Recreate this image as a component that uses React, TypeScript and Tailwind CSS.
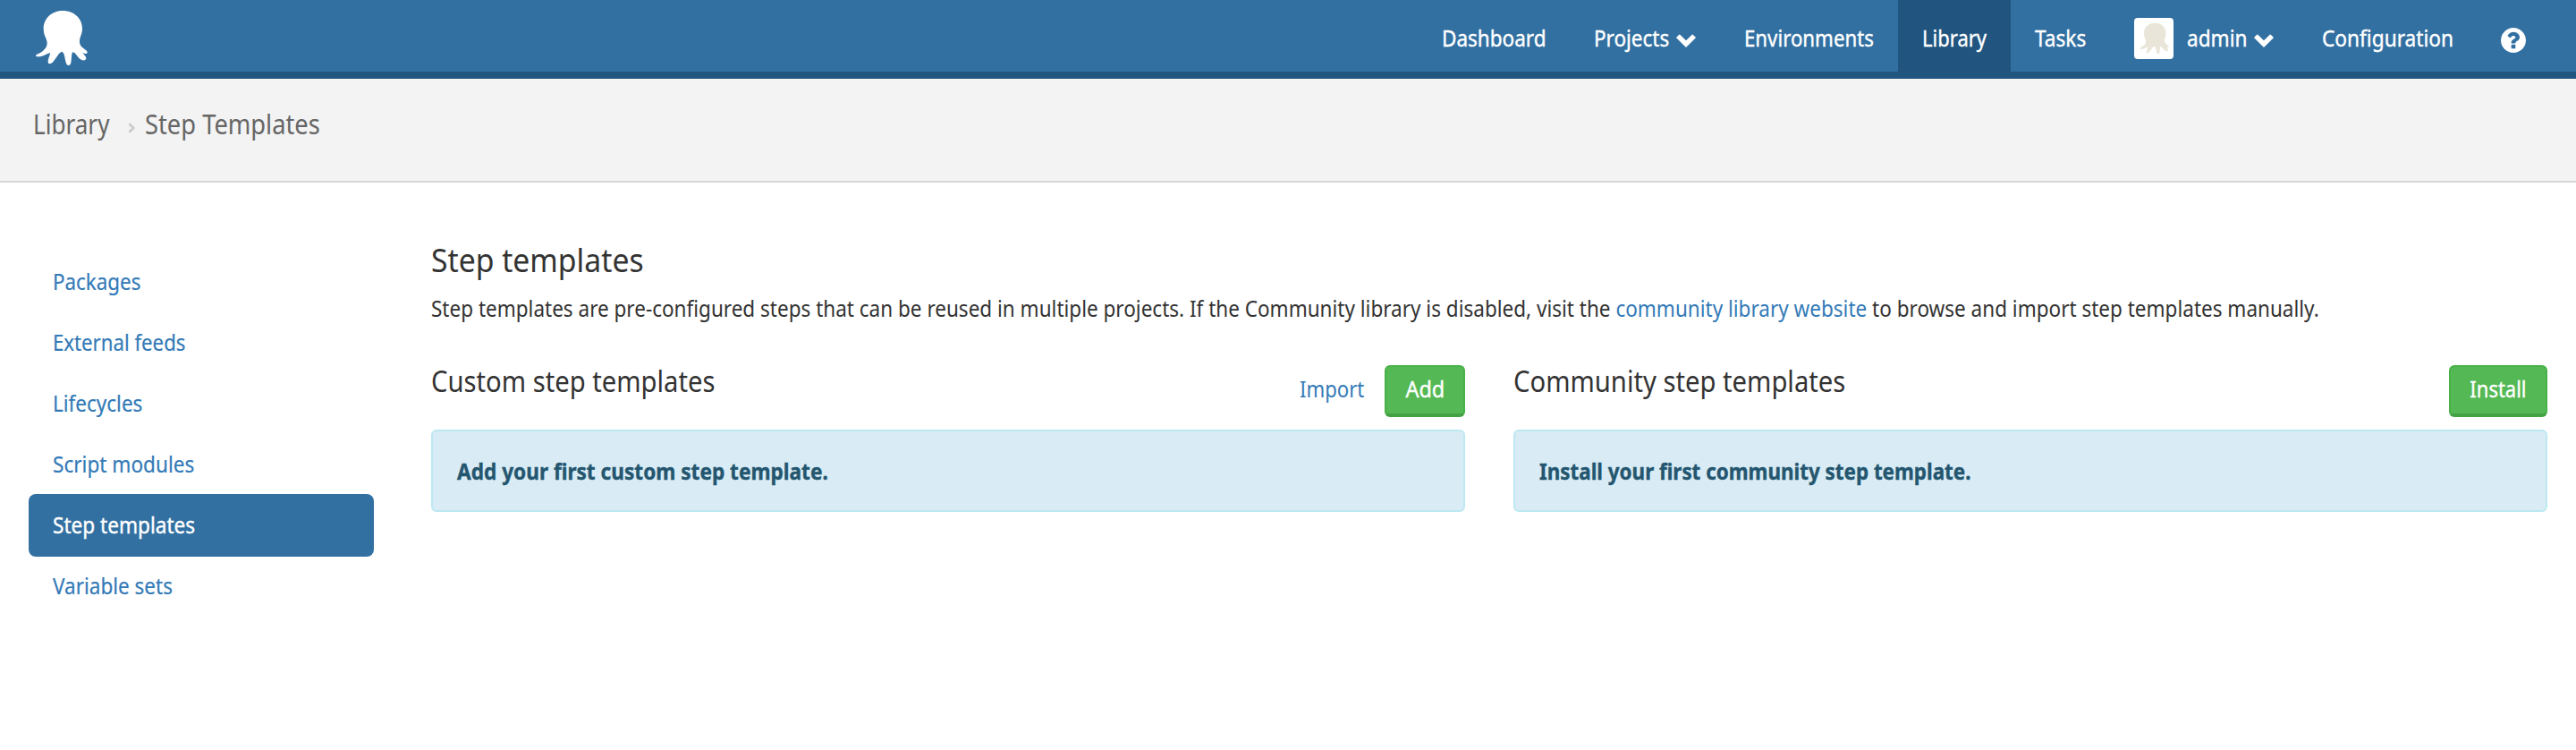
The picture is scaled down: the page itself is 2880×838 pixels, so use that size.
import React from "react";

const OCTOPUS =
  "M57 82C57 45 86 21 122 21C159 21 187 46 187 82C187 100 178 108 178 125C178 140 190 145 198 152C206 157 205 164 200 165C195 166 190 163 187 160C190 166 200 174 200 181C198 189 190 188 183 185C170 178 166 162 156 160C150 160 152 180 149 196C147 206 136 206 133 197C128 183 128 163 120 159C112 157 104 173 96 183C90 191 84 200 77 199C69 197 72 185 77 172C78 167 80 163 79 162C68 165 54 176 38 175C28 174 30 169 38 166C52 159 68 148 69 131C69 115 57 105 57 82Z";

const HELP =
  "M896 1376v-192q0-14-9-23t-23-9h-192q-14 0-23 9t-9 23v192q0 14 9 23t23 9h192q14 0 23-9t9-23zm256-672q0-88-55.500-163t-138.500-116-170-41q-243 0-371 213-15 24 8 42l132 100q7 6 19 6 16 0 25-12 53-68 86-92 34-24 86-24 48 0 85.500 26t37.500 59q0 38-20 61t-68 45q-63 28-115.500 86.500t-52.500 125.500v36q0 14 9 23t23 9h192q14 0 23-9t9-23q0-19 21.500-49.500t54.500-49.500q32-18 49-28.500t46-35 44.500-48 28-60.500 12.500-81zm384 192q0 209-103 385.500t-279.500 279.500-385.500 103-385.500-103-279.500-279.500-103-385.500 103-385.500 279.500-279.500 385.500-103 385.500 103 279.500 279.500 103 385.500z";

function Octopus({ className }: { className: string }) {
  return (
    <svg viewBox="31 21 174 183" className={className} fill="currentColor" aria-hidden="true">
      <path d={OCTOPUS} />
    </svg>
  );
}

function ChevronDown() {
  return (
    <svg viewBox="0 0 22 15" className="mt-[38px] h-[15px] w-[22px] shrink-0" fill="currentColor" aria-hidden="true">
      <path d="M.4 3.5 3.3.7Q3.8.2 4.3.7L11 7.3 17.7.7Q18.2.2 18.7.7L21.6 3.5Q22 4 21.6 4.5L11.5 14.5Q11 15 10.5 14.5L.4 4.5Q0 4 .4 3.500Z" />
    </svg>
  );
}

/* Text set slightly condensed, growing from its left edge. */
function Label({ className, children }: { className: string; children: React.ReactNode }) {
  return <span className={`block shrink-0 origin-left whitespace-nowrap ${className}`}>{children}</span>;
}

const NAV_ITEM = "flex h-20 items-start pl-[27px] [-webkit-text-stroke:0.4px_white]";

function TopBar() {
  return (
    <header className="flex h-[88px] justify-between border-b-8 border-[#21557f] bg-[#3270a2] pr-14 pl-10 text-white">
      <Octopus className="mt-3 h-[61px] w-[58px]" />
      <nav className="flex text-[25px] leading-[84px]">
        <a className={`${NAV_ITEM} w-[170px]`}>
          <Label className="scale-x-[.9]">Dashboard</Label>
        </a>
        <a className={`${NAV_ITEM} w-[168px]`}>
          <Label className="w-[92px] scale-x-[.9]">Projects</Label>
          <ChevronDown />
        </a>
        <a className={`${NAV_ITEM} w-[199px]`}>
          <Label className="scale-x-[.89]">Environments</Label>
        </a>
        <a className={`${NAV_ITEM} w-[126px] bg-[#21557f]`}>
          <Label className="scale-x-[.88]">Library</Label>
        </a>
        <a className={`${NAV_ITEM} w-[111px]`}>
          <Label className="scale-x-[.905]">Tasks</Label>
        </a>
        <a className={`${NAV_ITEM} w-[210px]`}>
          <span className="mt-5 flex h-[46px] w-11 shrink-0 rounded bg-white pt-[5px] pl-1.5">
            <Octopus className="h-9 w-[33px] text-[#e9e5d8]" />
          </span>
          <Label className="ml-[15px] w-[75px] scale-x-[.904]">admin</Label>
          <ChevronDown />
        </a>
        <a className={`${NAV_ITEM} w-[200px]`}>
          <Label className="scale-x-[.907]">Configuration</Label>
        </a>
        <a className="flex h-20 w-[55px] pl-[27px]" aria-label="Help">
          <svg viewBox="0 128 1536 1536" className="mt-[31px] size-7 shrink-0" fill="currentColor">
            <path d={HELP} />
          </svg>
        </a>
      </nav>
    </header>
  );
}

function Breadcrumb() {
  return (
    <div className="flex h-[116px] border-b-2 border-[#d6d6d6] bg-[#f3f3f3] pt-[31px] pl-[37px] text-[30px] leading-10 text-[#666]">
      <Label className="w-[106px] scale-x-[.87]">Library</Label>
      <svg viewBox="0 0 8 12" className="mt-[18px] mr-[11px] h-3 w-2" fill="none" stroke="#ccc" strokeWidth="2.8" strokeLinejoin="round" aria-hidden="true">
        <path d="M1.400 1.200 6.200 6 1.400 10.800" />
      </svg>
      <Label className="scale-x-[.91]">Step Templates</Label>
    </div>
  );
}

const SECTIONS = [
  { name: "Packages", fit: "scale-x-[.895]" },
  { name: "External feeds", fit: "scale-x-[.888]" },
  { name: "Lifecycles", fit: "scale-x-[.9]" },
  { name: "Script modules", fit: "scale-x-[.903]" },
  { name: "Step templates", fit: "scale-x-[.903]", active: true },
  { name: "Variable sets", fit: "scale-x-[.9]" },
];

function Sidebar() {
  return (
    <ul className="w-[386px] shrink-0 pt-[76px] text-[25px] leading-[68px]">
      {SECTIONS.map(({ name, fit, active }) => (
        <li key={name} className="h-[68px]">
          <a
            className={
              active
                ? "block h-[70px] rounded-lg bg-[#3270a2] pl-[27px] text-white [-webkit-text-stroke:0.4px_white]"
                : "block h-[70px] pl-[27px] text-[#337ab7] [-webkit-text-stroke:0.2px_#337ab7]"
            }
          >
            <Label className={fit}>{name}</Label>
          </a>
        </li>
      ))}
    </ul>
  );
}

const BUTTON =
  "flex h-[58px] justify-center rounded-md border-x-2 border-t-2 border-b-4 border-x-[#48b148] border-t-[#48b148] border-b-[#43a243] bg-[#54b954] leading-[48px] text-white [-webkit-text-stroke:0.4px_white]";

function Panel({ title, message, children }: { title: string; message: React.ReactNode; children: React.ReactNode }) {
  return (
    <section className="w-[1156px] shrink-0 text-[25px]">
      <div className="flex h-[72px] items-start justify-between">
        <h2 className="text-[32px] leading-[35px]">
          <Label className="scale-x-[.913]">{title}</Label>
        </h2>
        <div className="flex">{children}</div>
      </div>
      <div className="h-[92px] rounded-md border-2 border-[#bce8f1] bg-[#d9ecf6] pl-[27px] leading-[88px] font-bold text-[#24566f] [-webkit-text-stroke:0.4px_#24566f]">
        {message}
      </div>
    </section>
  );
}

export default function App() {
  return (
    <div className="h-[838px] w-[2880px] overflow-hidden bg-white font-['Noto_Sans',sans-serif] text-[#333]">
      <TopBar />
      <Breadcrumb />
      <div className="flex px-8">
        <Sidebar />
        <main className="ml-16 pt-16">
          <h1 className="text-[37px] leading-[44px]">
            <Label className="scale-x-[.911]">Step templates</Label>
          </h1>
          <p className="mt-3.5 w-0 text-[25px] leading-9">
            <Label className="w-max scale-x-[.9005]">
              Step templates are pre-configured steps that can be reused in multiple projects. If the Community library
              is disabled, visit the <a className="text-[#337ab7]">community library website</a> to browse and import
              step templates manually.
            </Label>
          </p>
          <div className="mt-[46px] flex gap-[54px]">
            <Panel
              title="Custom step templates"
              message={<Label className="scale-x-[.905]">Add your first custom step template.</Label>}
            >
              <a className="w-[95px] leading-[52px] text-[#337ab7]">
                <Label className="scale-x-[.885]">Import</Label>
              </a>
              <button className={`${BUTTON} w-[90px]`}>
                <span className="block scale-x-[.938]">Add</span>
              </button>
            </Panel>
            <Panel
              title="Community step templates"
              message={<Label className="scale-x-[.896]">Install your first community step template.</Label>}
            >
              <button className={`${BUTTON} w-[110px]`}>
                <span className="block scale-x-[.879]">Install</span>
              </button>
            </Panel>
          </div>
        </main>
      </div>
    </div>
  );
}
